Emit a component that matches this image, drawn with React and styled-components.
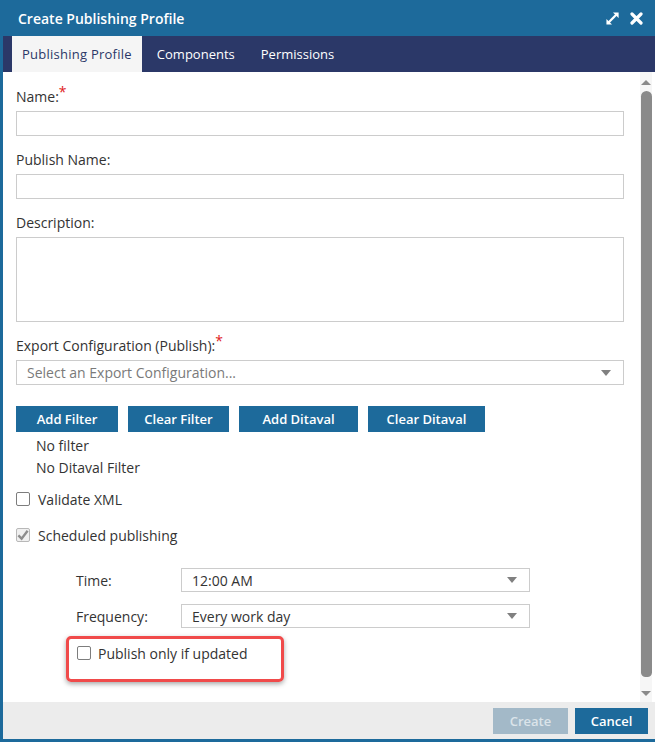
import React from "react";
import styled, { createGlobalStyle } from "styled-components";

const Global = createGlobalStyle`
  html, body { margin: 0; padding: 0; background: #fff; }
  body { font-family: "Open Sans", "Noto Sans", sans-serif; color: #333; }
  * { box-sizing: border-box; }
`;

const BLUE = "#1d6a9b";
const NAVY = "#2b3868";

const Window = styled.div`
  width: 655px;
  height: 742px;
  display: flex;
  flex-direction: column;
  background: #fff;
`;

const TitleBar = styled.div`
  height: 36px;
  flex: none;
  background: ${BLUE};
  display: flex;
  align-items: center;
  justify-content: space-between;
  padding: 0 12px 0 18px;
`;

const Title = styled.div`
  color: #fff;
  font-size: 14px;
  font-weight: 600;
`;

const TitleIcons = styled.div`
  display: flex;
  align-items: center;
  gap: 10px;
  color: #fff;
`;

const Frame = styled.div`
  flex: 1;
  display: flex;
  flex-direction: column;
  border-left: 3px solid ${BLUE};
  border-bottom: 3px solid ${BLUE};
  min-height: 0;
`;

const TabBar = styled.div`
  height: 36px;
  flex: none;
  background: ${NAVY};
  display: flex;
  align-items: stretch;
  gap: 4px;
  padding-left: 9px;
`;

const Tab = styled.div`
  display: flex;
  align-items: center;
  padding: 0 ${(p) => (p.$active ? 10 : 11)}px;
  font-size: 13px;
  font-weight: 400;
  letter-spacing: ${(p) => (p.$active ? "0.25px" : "0")};
  color: ${(p) => (p.$active ? NAVY : "#fff")};
  background: ${(p) => (p.$active ? "#f5f5f5" : "transparent")};
`;

const Body = styled.div`
  flex: 1;
  display: flex;
  min-height: 0;
  padding-right: 3px;
`;

const Content = styled.div`
  flex: 1;
  padding: 15px 16px 0 13px;
  display: flex;
  flex-direction: column;
`;

const Field = styled.div`
  display: flex;
  flex-direction: column;
  margin-bottom: ${(p) => p.$mb ?? 14}px;
`;

const Label = styled.label`
  font-size: 14px;
  line-height: 20px;
  margin-bottom: 4px;
  color: #333;
`;

const Req = styled.sup`
  color: #e0201c;
  font-size: 14px;
  line-height: 0;
  position: relative;
  top: 1px;
`;

const Input = styled.div`
  height: ${(p) => p.$h ?? 25}px;
  border: 1px solid #cccccc;
  background: #fff;
`;

const Select = styled.div`
  height: ${(p) => p.$h ?? 25}px;
  border: 1px solid #cccccc;
  background: #fff;
  display: flex;
  align-items: center;
  justify-content: space-between;
  padding: 0 12px 0 10px;
  font-size: 14px;
  color: ${(p) => (p.$placeholder ? "#7a7a7a" : "#333")};
  flex: ${(p) => (p.$grow ? 1 : "none")};
`;

const Caret = styled.span`
  width: 0;
  height: 0;
  border-left: 5px solid transparent;
  border-right: 5px solid transparent;
  border-top: 6px solid #808080;
`;

const ButtonRow = styled.div`
  display: flex;
  gap: 10px;
  margin-top: 21px;
`;

const Button = styled.button`
  height: 26px;
  width: ${(p) => p.$w}px;
  border: none;
  background: ${(p) => (p.$disabled ? "#a3b9c8" : BLUE)};
  color: ${(p) => (p.$disabled ? "#dbe4ea" : "#fff")};
  font-family: inherit;
  font-size: 13px;
  font-weight: 600;
  padding: 0;
  cursor: pointer;
`;

const InfoLines = styled.div`
  padding-left: 20px;
  margin-top: 3px;
  font-size: 14px;
  line-height: 22px;
`;

const CheckRow = styled.div`
  display: flex;
  align-items: center;
  gap: ${(p) => p.$gap ?? 8}px;
  height: 20px;
  font-size: 14px;
  margin-top: ${(p) => p.$mt ?? 0}px;
`;

const Box = styled.span`
  width: 14px;
  height: 14px;
  flex: none;
  border: 1px solid ${(p) => (p.$checked ? "#b8b8b8" : "#7d7d7d")};
  border-radius: 2px;
  background: ${(p) => (p.$checked ? "#f0f0f0" : "#fff")};
  display: flex;
  align-items: center;
  justify-content: center;
`;

const Schedule = styled.div`
  padding-left: 50px;
  margin-top: 23px;
  display: flex;
  flex-direction: column;
`;

const SchedRow = styled.div`
  display: flex;
  align-items: center;
  margin-bottom: ${(p) => p.$mb ?? 12}px;
  padding-left: 10px;
`;

const SchedLabel = styled.div`
  width: 105px;
  font-size: 14px;
`;

const SelectWrap = styled.div`
  width: 349px;
  display: flex;
`;

const Highlight = styled.div`
  width: 218px;
  height: 46px;
  margin-top: -4px;
  border: 3px solid #f04a4a;
  border-radius: 5px;
  box-shadow: 0 2px 5px rgba(0, 0, 0, 0.35);
  padding: 4px 0 0 8px;
`;

const ScrollBar = styled.div`
  width: 12px;
  flex: none;
  background: #f6f6f6;
  display: flex;
  flex-direction: column;
  align-items: center;
  padding: 8px 0 6px;
`;

const Arrow = styled.span`
  width: 0;
  height: 0;
  border-left: 5px solid transparent;
  border-right: 5px solid transparent;
  ${(p) =>
    p.$up
      ? "border-bottom: 5px solid #8a8a8a;"
      : "border-top: 5px solid #8a8a8a;"}
  flex: none;
`;

const Thumb = styled.div`
  width: 11px;
  flex: 1;
  margin: 6px 0 14px;
  background: #8a8a8a;
  border-radius: 6px 6px 5px 5px;
`;

const Footer = styled.div`
  height: 37px;
  flex: none;
  background: #ececec;
  display: flex;
  justify-content: flex-end;
  align-items: flex-start;
  padding: 6px 7px 0 0;
  gap: 7px;
`;

const Check = ({ color = "#8d8d8d" }) => (
  <svg width="13" height="12" viewBox="0 0 13 12">
    <path d="M1.5 6.5 L5 10 L11.5 1.5" fill="none" stroke={color} strokeWidth="2.6" />
  </svg>
);

export default function App() {
  return (
    <>
      <Global />
      <Window>
        <TitleBar>
          <Title>Create Publishing Profile</Title>
          <TitleIcons>
            <svg width="15" height="15" viewBox="0 0 16 16">
              <path d="M8.5 1.5h6v6z" fill="#fff" />
              <path d="M7.5 14.5h-6v-6z" fill="#fff" />
              <path d="M12.5 3.5 3.5 12.5" fill="none" stroke="#fff" strokeWidth="2.4" />
            </svg>
            <svg width="13" height="13" viewBox="0 0 13 13">
              <path d="M2 2 11 11 M11 2 2 11" stroke="#fff" strokeWidth="3.2" strokeLinecap="round" />
            </svg>
          </TitleIcons>
        </TitleBar>
        <Frame>
          <TabBar>
            <Tab $active>Publishing Profile</Tab>
            <Tab>Components</Tab>
            <Tab>Permissions</Tab>
          </TabBar>
          <Body>
            <Content>
              <Field>
                <Label>
                  Name:<Req>*</Req>
                </Label>
                <Input />
              </Field>
              <Field>
                <Label>Publish Name:</Label>
                <Input />
              </Field>
              <Field>
                <Label>Description:</Label>
                <Input $h={85} />
              </Field>
              <Field $mb={0}>
                <Label>
                  Export Configuration (Publish):<Req>*</Req>
                </Label>
                <Select $placeholder>
                  Select an Export Configuration...
                  <Caret />
                </Select>
              </Field>
              <ButtonRow>
                <Button $w={102}>Add Filter</Button>
                <Button $w={101}>Clear Filter</Button>
                <Button $w={119}>Add Ditaval</Button>
                <Button $w={117}>Clear Ditaval</Button>
              </ButtonRow>
              <InfoLines>
                <div>No filter</div>
                <div>No Ditaval Filter</div>
              </InfoLines>
              <CheckRow $mt={10}>
                <Box />
                Validate XML
              </CheckRow>
              <CheckRow $mt={16}>
                <Box $checked>
                  <Check />
                </Box>
                Scheduled publishing
              </CheckRow>
              <Schedule>
                <SchedRow>
                  <SchedLabel>Time:</SchedLabel>
                  <SelectWrap>
                    <Select $grow $h={24}>
                      12:00 AM
                      <Caret />
                    </Select>
                  </SelectWrap>
                </SchedRow>
                <SchedRow>
                  <SchedLabel>Frequency:</SchedLabel>
                  <SelectWrap>
                    <Select $grow $h={24}>
                      Every work day
                      <Caret />
                    </Select>
                  </SelectWrap>
                </SchedRow>
                <Highlight>
                  <CheckRow $gap={7}>
                    <Box />
                    Publish only if updated
                  </CheckRow>
                </Highlight>
              </Schedule>
            </Content>
            <ScrollBar>
              <Arrow $up />
              <Thumb />
              <Arrow />
            </ScrollBar>
          </Body>
          <Footer>
            <Button $w={75} $disabled>
              Create
            </Button>
            <Button $w={73}>Cancel</Button>
          </Footer>
        </Frame>
      </Window>
    </>
  );
}
